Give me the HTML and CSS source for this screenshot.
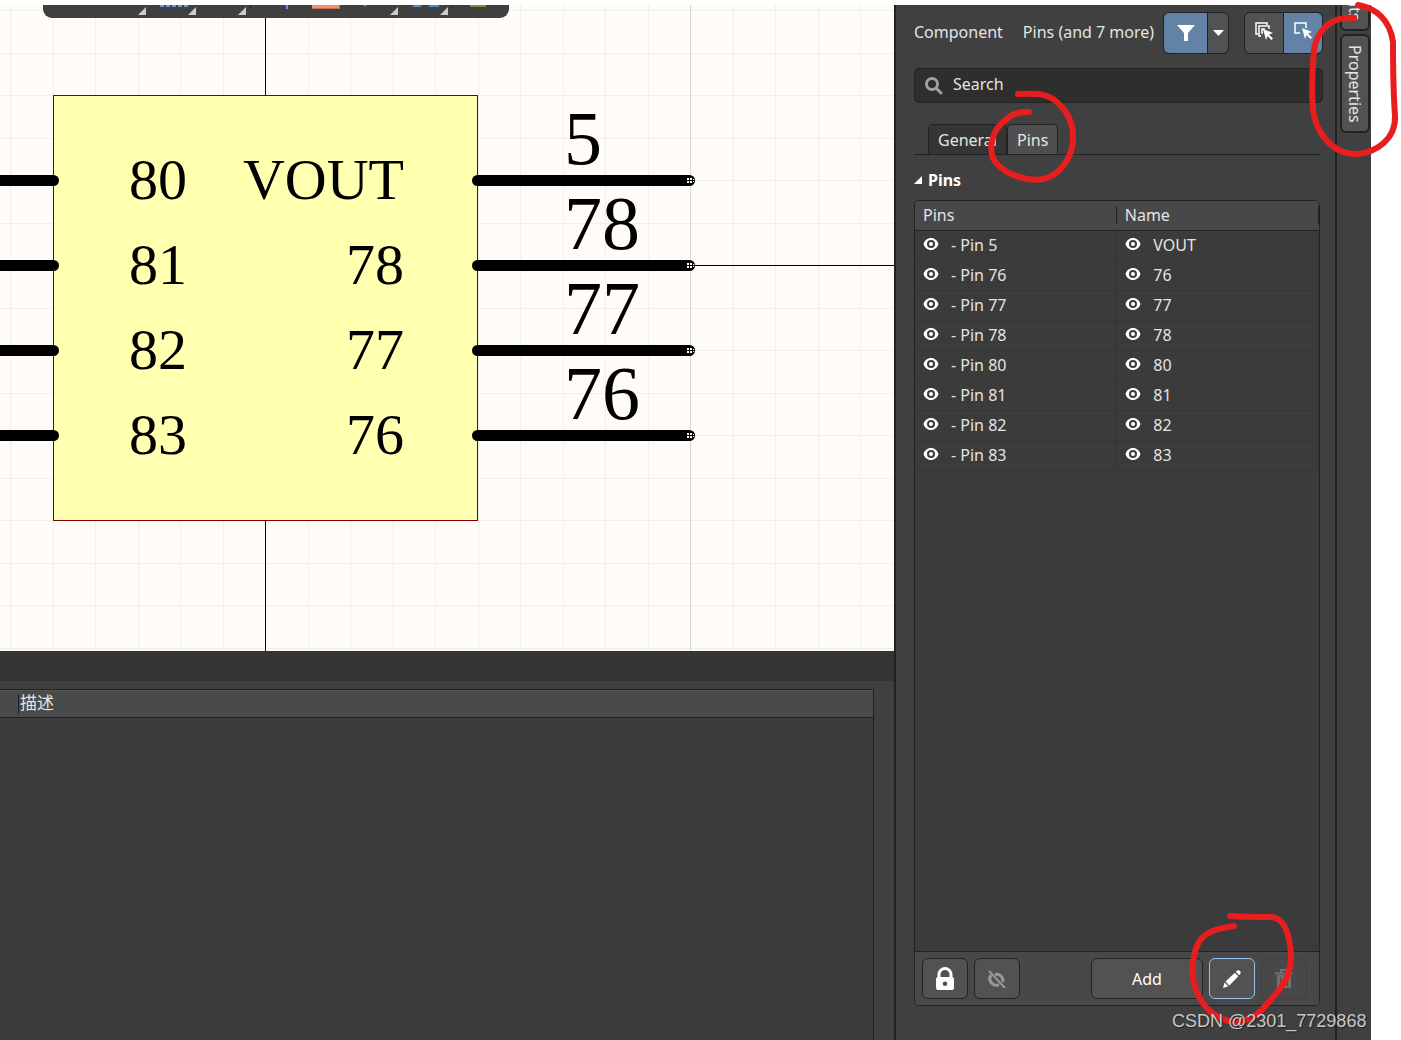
FILE: index.html
```html
<!DOCTYPE html>
<html lang="en">
<head>
    <meta charset="UTF-8">
    <meta name="viewport" content="width=device-width, initial-scale=1.0">
    <title>Component Pin Editor</title>
    <link rel="stylesheet" href="styles.css">
</head>
<body>
    <!-- Shared icons -->
    <svg class="defs" width="0" height="0" aria-hidden="true">
        <symbol id="eye" viewBox="0 0 16 14">
            <path fill="#fff" fill-rule="evenodd" d="M8 1C4.400 1 1.600 3.400.500 7c1.100 3.600 3.900 6 7.500 6s6.400-2.400 7.500-6C14.400 3.400 11.600 1 8 1zM8 3a4 4 0 1 1 0 8 4 4 0 0 1 0-8z"/>
            <circle cx="8" cy="7" r="2" fill="#fff"/>
        </symbol>
    </svg>

    <div class="app">
        <main class="workspace">
            <div class="schematic">
                <svg class="sheet" width="100%" height="100%">
                    <defs>
                        <pattern id="grid" width="85" height="85" patternUnits="userSpaceOnUse">
                            <path fill="#eff0ec" d="M10 0h1v85h-1zM53 0h1v85h-1zM0 5h85v1H0zM0 48h85v1H0z"/>
                        </pattern>
                        <g id="hotspot">
                            <path fill="#fff" d="M-3-3h2v2h-2zM0-3h2v2h-2zM-3 0h2v2h-2zM0 0h2v2h-2zM3-2h1v1h-1zM3 0h1v1h-1z"/>
                        </g>
                    </defs>
                    <rect width="100%" height="100%" fill="#fffcf7"/>
                    <rect width="100%" height="100%" fill="url(#grid)"/>
                    <rect x="690" width="1" height="100%" fill="#d6dad6"/>

                    <!-- Origin axes -->
                    <rect x="265" width="1" height="100%"/>
                    <rect y="260" width="100%" height="1"/>

                    <rect x="53.500" y="90.500" width="424" height="425" fill="#ffffb0" stroke="#800000"/>

                    <g stroke="#000" stroke-width="11" stroke-linecap="round">
                        <path d="M-10 175.500H53.500M-10 260.500H53.500M-10 345.500H53.500M-10 430.500H53.500"/>
                        <path d="M477.500 175.500H689.500M477.500 260.500H689.500M477.500 345.500H689.500M477.500 430.500H689.500"/>
                    </g>
                    <use href="#hotspot" x="690" y="176"/>
                    <use href="#hotspot" x="690" y="261"/>
                    <use href="#hotspot" x="690" y="346"/>
                    <use href="#hotspot" x="690" y="431"/>

                    <g class="pin-name">
                        <text x="129" y="194">80</text>
                        <text x="129" y="279">81</text>
                        <text x="129" y="364">82</text>
                        <text x="129" y="449">83</text>
                    </g>
                    <g class="pin-name pin-name-right">
                        <text x="404" y="194">VOUT</text>
                        <text x="404" y="279">78</text>
                        <text x="404" y="364">77</text>
                        <text x="404" y="449">76</text>
                    </g>
                    <g class="pin-number">
                        <text x="564" y="159">5</text>
                        <text x="564" y="244">78</text>
                        <text x="564" y="329">77</text>
                        <text x="564" y="414">76</text>
                    </g>
                </svg>
                <div class="toolbar">
                    <svg width="466" height="13" aria-hidden="true">
                        <path fill="#ccc" d="M103 10V2l-8 8zM153 10V2l-8 8zM203 10V2l-8 8zM355 10V2l-8 8zM405 10V2l-8 8z"/>
                        <path fill="#222" d="M207 0h1v4h-1zM409 0h1v4h-1z"/>
                        <path fill="#7190e0" d="M117 0h4v2h-4zM123 0h4v2h-4zM129 0h4v2h-4zM135 0h4v2h-4zM141 0h4v2h-4zM243 0h2v4h-2z"/>
                        <path fill="#c96d50" d="M269 0h28v4h-28z"/>
                        <path fill="#ef9270" d="M269 0h27v3h-27z"/>
                        <path fill="#4a8fd0" d="M320 0h4l-2 2zM371 0h6l2 2h-10zM387 0h8l2 2h-12z"/>
                        <path fill="#948044" d="M427 0h16v2h-16z"/>
                    </svg>
                </div>
            </div>

            <section class="messages">
                <div class="messages-bar"></div>
                <div class="messages-body">
                    <table class="messages-table">
                        <thead>
                            <tr><th class="spacer"></th><th lang="zh">描述</th></tr>
                        </thead>
                    </table>
                </div>
            </section>
        </main>

        <aside class="panel">
            <header class="panel-header">
                <span class="object-type">Component</span>
                <span class="object-filter">Pins (and 7 more)</span>
                <div class="button-group">
                    <button class="tool-button active filter-button" aria-label="Filter">
                        <svg width="18" height="16" viewBox="0 0 18 16"><path fill="#fff" d="M0 0h18l-7 8v8H7V8z"/></svg>
                    </button>
                    <button class="tool-button arrow-button" aria-label="Filter options">
                        <svg width="11" height="6" viewBox="0 0 11 6"><path fill="#fff" d="M0 0h11L5.500 6z"/></svg>
                    </button>
                </div>
                <div class="button-group select-group">
                    <button class="tool-button select-button" aria-label="Select all">
                        <svg width="20" height="20" viewBox="0 0 20 20">
                            <path fill="none" stroke="#fff" stroke-width="1.500" d="M4 13H2V2h11v2M7 15H5V5h10v3M9 12H8V8h3"/>
                            <path fill="#fff" d="M9 8l10 4-4 1.500 4 4-1.500 1.500-4-4-1.500 4z"/>
                        </svg>
                    </button>
                    <button class="tool-button active select-button" aria-label="Select one">
                        <svg width="20" height="20" viewBox="0 0 20 20">
                            <path fill="none" stroke="#fff" stroke-width="1.500" d="M7 12H2V2h11v5"/>
                            <path fill="#fff" d="M9 7l10 4-4 1.500 4 4-1.500 1.500-4-4-1.500 4z"/>
                        </svg>
                    </button>
                </div>
            </header>

            <label class="search">
                <svg width="18" height="18" viewBox="0 0 18 18" aria-hidden="true">
                    <circle cx="7" cy="7" r="5.500" fill="none" stroke="#a0a0a0" stroke-width="3"/>
                    <path stroke="#a0a0a0" stroke-width="3" stroke-linecap="round" d="M11 11l5 5"/>
                </svg>
                <input class="search-input" type="text" placeholder="Search" aria-label="Search">
            </label>

            <nav class="tabs">
                <button class="tab">General</button>
                <button class="tab selected">Pins</button>
            </nav>

            <h2 class="section-title">
                <svg width="8" height="8" viewBox="0 0 8 8" aria-hidden="true"><path fill="#fff" d="M8 0v8H0z"/></svg>
                Pins
            </h2>

            <div class="pin-list">
                <table class="pin-table">
                    <thead>
                        <tr><th>Pins</th><th>Name</th></tr>
                    </thead>
                    <tbody>
                        <tr>
                            <td><svg class="eye"><use href="#eye"/></svg>- Pin 5</td>
                            <td><svg class="eye"><use href="#eye"/></svg>VOUT</td>
                        </tr>
                        <tr>
                            <td><svg class="eye"><use href="#eye"/></svg>- Pin 76</td>
                            <td><svg class="eye"><use href="#eye"/></svg>76</td>
                        </tr>
                        <tr>
                            <td><svg class="eye"><use href="#eye"/></svg>- Pin 77</td>
                            <td><svg class="eye"><use href="#eye"/></svg>77</td>
                        </tr>
                        <tr>
                            <td><svg class="eye"><use href="#eye"/></svg>- Pin 78</td>
                            <td><svg class="eye"><use href="#eye"/></svg>78</td>
                        </tr>
                        <tr>
                            <td><svg class="eye"><use href="#eye"/></svg>- Pin 80</td>
                            <td><svg class="eye"><use href="#eye"/></svg>80</td>
                        </tr>
                        <tr>
                            <td><svg class="eye"><use href="#eye"/></svg>- Pin 81</td>
                            <td><svg class="eye"><use href="#eye"/></svg>81</td>
                        </tr>
                        <tr>
                            <td><svg class="eye"><use href="#eye"/></svg>- Pin 82</td>
                            <td><svg class="eye"><use href="#eye"/></svg>82</td>
                        </tr>
                        <tr>
                            <td><svg class="eye"><use href="#eye"/></svg>- Pin 83</td>
                            <td><svg class="eye"><use href="#eye"/></svg>83</td>
                        </tr>
                    </tbody>
                </table>
                <div class="pin-actions">
                    <button class="action-button" aria-label="Lock">
                        <svg width="18" height="24" viewBox="0 0 18 24">
                            <path fill="none" stroke="#fff" stroke-width="3" d="M3 11V7.500a6 6 0 0 1 12 0V11"/>
                            <path fill="#fff" fill-rule="evenodd" d="M2 10h14q2 0 2 2v9q0 2-2 2H2q-2 0-2-2v-9q0-2 2-2zm7 4.500a2.300 2.300 0 1 0 0 4.600 2.300 2.300 0 0 0 0-4.600z"/>
                        </svg>
                    </button>
                    <button class="action-button" aria-label="Hide">
                        <svg width="18" height="18" viewBox="0 0 18 18">
                            <path fill="none" stroke="#999" stroke-width="3" d="M3 5C1 8 1.500 11 4 13.500 6 15.500 9 15.500 11 14.500M7 4.500c3.500-.700 7 1.300 7.800 4.500.200 1 0 2-.500 3"/>
                            <path fill="none" stroke="#999" stroke-width="2" d="M1 1l16 17"/>
                        </svg>
                    </button>
                    <button class="action-button add-button">Add</button>
                    <button class="action-button focused" aria-label="Edit">
                        <svg width="18" height="18" viewBox="0 0 18 18">
                            <path fill="#fff" d="M0 18l1.500-5.500 3.800 3.800zM2.500 11.500l9.300-8.800 3.500 3.500-8.900 9.200zM12.800 1.800l1.400-1.300c1.900-1.300 4.500 1.300 3.200 3.200l-1.200 1.500z"/>
                        </svg>
                    </button>
                    <button class="action-button" aria-label="Delete" disabled>
                        <svg width="18" height="20" viewBox="0 0 18 20">
                            <path fill="none" stroke="#707070" stroke-width="2" d="M0 4.500h18M6 4V1h6v3"/>
                            <path fill="#707070" fill-rule="evenodd" d="M2 6h14v13H2zM5 8v9h1V8zM8.500 8v9h1V8zM12 8v9h1V8z"/>
                        </svg>
                    </button>
                </div>
            </div>
        </aside>

        <nav class="side-tabs">
            <button class="side-tab clipped">Components</button>
            <button class="side-tab">Properties</button>
        </nav>

        <div class="watermark">CSDN @2301_7729868</div>
    </div>

    <!-- Red pen marks -->
    <svg class="marks" aria-hidden="true">
        <g fill="none" stroke="#e81e1e" stroke-width="6" stroke-linecap="round" stroke-linejoin="round">
            <path d="M1018 94C1041 93 1049 94 1059 104C1070 115 1074 126 1073 140C1072 160 1058 176 1043 179C1026 182 1006 174 997 164C988 154 990 136 1000 125C1009 116 1016 111 1029 112"/>
            <path d="M1358 5C1376 8 1390 20 1393 42C1393 65 1393 88 1395 116C1396 139 1376 153 1356 154C1336 155 1319 137 1314 116C1310 91 1313 66 1314 49C1318 28 1333 16 1354 18"/>
            <path d="M1230 916C1244 917 1257 917 1272 917C1286 919 1290 938 1291 955C1291 974 1284 985 1274 996C1264 1007 1258 1018 1240 1021C1220 1024 1203 1009 1196 990C1190 974 1192 949 1202 938C1210 930 1221 928 1234 926"/>
        </g>
    </svg>
</body>
</html>
```
FILE: styles.css
```css
* {
    margin: 0;
    padding: 0;
    box-sizing: border-box;
}
body {
    height: 100vh;
    padding: 5px 30px 0 0;
    overflow: hidden;
    background-color: #fff;
    color: #e4e4e4;
    font-family: "Noto Sans", "Noto Sans CJK SC", sans-serif;
    font-size: 16px;
    line-height: 24px;
}
button, input {
    font: inherit;
    color: inherit;
}
svg {
    display: block;
    flex: none;
}
.defs {
    position: absolute;
}
.app {
    position: relative;
    display: flex;
    height: 100%;
    background-color: #404040;
}

/* Schematic sheet */
.workspace {
    flex: 1;
    min-width: 0;
    display: flex;
    flex-direction: column;
}
.schematic {
    position: relative;
    flex: 646 0 0;
    min-height: 0;
    overflow: hidden;
}
.sheet {
    font-family: "Liberation Serif", serif;
}
.pin-name {
    font-size: 58px;
}
.pin-name-right {
    text-anchor: end;
}
.pin-number {
    font-size: 76px;
}
.toolbar {
    position: absolute;
    top: 0;
    left: 43px;
    overflow: hidden;
    border-radius: 0 0 9px 9px;
    background-color: #404040;
}

/* Messages panel */
.messages {
    flex: 389 0 0;
    min-height: 0;
    display: flex;
    flex-direction: column;
    padding-right: 20px;
}
.messages-bar {
    height: 30px;
    margin: 0 -20px 8px 0;
    background-color: #353535;
}
.messages-body {
    flex: 1;
    border: solid #222;
    border-width: 1px 1px 0 0;
    background-color: #3b3b3b;
}
.messages-table {
    width: 100%;
    border-collapse: collapse;
    background-color: #4a4a4a;
    box-shadow: inset 0 1px #555;
}
.messages-table th {
    height: 27px;
    padding: 0 1px;
    border-bottom: 1px solid #222;
    font-size: 17px;
    font-weight: normal;
    text-align: left;
}
.messages-table .spacer {
    width: 19px;
    background: linear-gradient(#222, #222) 18px 4px / 1px 20px no-repeat;
}

/* Properties panel */
.panel {
    width: 441px;
    display: flex;
    flex-direction: column;
    padding: 7px 12px 34px 18px;
    border-left: 2px solid #222;
}
.panel-header {
    display: flex;
    align-items: center;
    height: 42px;
}
.object-type,
.object-filter {
    padding-bottom: 2px;
}
.object-type {
    margin-right: 20px;
}
.object-filter {
    flex: 1;
    white-space: nowrap;
}
.button-group {
    display: flex;
    overflow: hidden;
    height: 42px;
    border: 1px solid #222;
    border-radius: 6px;
    background-color: #222;
    gap: 1px;
}
.select-group {
    margin-left: 15px;
}
.tool-button {
    display: flex;
    align-items: center;
    justify-content: center;
    border: none;
    background-color: #525252;
}
.tool-button.active {
    background-color: #6283a5;
}
.filter-button {
    width: 43px;
}
.arrow-button {
    width: 20px;
}
.select-button {
    width: 38px;
    padding-bottom: 4px;
}
.search {
    display: flex;
    align-items: center;
    gap: 10px;
    height: 35px;
    margin-top: 14px;
    padding: 0 10px;
    border: 1px solid #222;
    border-radius: 5px;
    background-color: #2e2e2e;
}
.search-input {
    flex: 1;
    padding-bottom: 3px;
    border: none;
    outline: none;
    background: none;
}
.search-input::placeholder {
    color: #e4e4e4;
}
.tabs {
    display: flex;
    height: 31px;
    margin: 21px 3px 0 0;
    padding-left: 14px;
    border-bottom: 1px solid #222;
}
.tab {
    padding: 0 9px;
    border: 1px solid #222;
    border-bottom: none;
    border-radius: 5px 5px 0 0;
    background-color: #353535;
}
.tab.selected {
    background-color: #4f4f4f;
}
.section-title {
    display: flex;
    align-items: center;
    gap: 6px;
    margin: 13px 0 8px;
    color: #fff;
    font-size: 16px;
    line-height: 24px;
}
.pin-list {
    flex: 1;
    min-height: 0;
    display: flex;
    flex-direction: column;
    justify-content: space-between;
    margin-right: 3px;
    overflow: hidden;
    border: 1px solid #222;
    border-radius: 5px;
    background-color: #3b3b3b;
}
.pin-table {
    width: 100%;
    border-collapse: collapse;
    table-layout: fixed;
}
.pin-table th,
.pin-table td {
    height: 30px;
    padding: 0 8px;
    font-weight: normal;
    line-height: 20px;
    text-align: left;
}
.pin-table thead {
    background-color: #484848;
}
.pin-table th {
    height: 29px;
    border-bottom: 1px solid #222;
    background: linear-gradient(#222, #222) right 5px / 1px 18px no-repeat;
}
.pin-table td {
    border: solid #353535;
    border-width: 0 1px 1px 0;
}
.eye {
    display: inline-block;
    width: 16px;
    height: 14px;
    margin-right: 12px;
}
.pin-actions {
    display: flex;
    gap: 6px;
    padding: 6px 12px 6px 7px;
    border-top: 1px solid #222;
    background-color: #484848;
}
.action-button {
    display: flex;
    align-items: center;
    justify-content: center;
    width: 46px;
    height: 41px;
    border: 1px solid #222;
    border-radius: 6px;
    background-color: #525252;
}
.add-button {
    width: 112px;
    margin-left: auto;
    color: #fff;
}
.action-button.focused {
    border-color: #96c3f0;
}
.action-button:disabled {
    border-color: #404040;
    background-color: #484848;
}

/* Vertical tabs on the right edge */
.side-tabs {
    display: flex;
    flex-direction: column;
    width: 36px;
    gap: 3px;
    padding: 0 1px 0 3px;
    border-left: 2px solid #222;
}
.side-tab {
    display: flex;
    align-items: center;
    justify-content: center;
    height: 99px;
    border: 2px solid #222;
    border-radius: 6px;
    background-color: #525252;
    writing-mode: vertical-rl;
}
.side-tab.clipped {
    justify-content: flex-end;
    height: 26px;
    padding-bottom: 8px;
    overflow: hidden;
    border-top: none;
    border-radius: 0 0 6px 6px;
}

.watermark {
    position: absolute;
    left: calc(100% - 199px);
    bottom: 7px;
    z-index: 2;
    color: #c8c8c8;
    font-family: "Liberation Sans", sans-serif;
    font-size: 18px;
    white-space: nowrap;
    text-shadow: 1px 1px 1px #222;
}
.marks {
    position: absolute;
    top: 0;
    left: 0;
    z-index: 1;
    width: 100%;
    height: 100%;
    pointer-events: none;
}
```
